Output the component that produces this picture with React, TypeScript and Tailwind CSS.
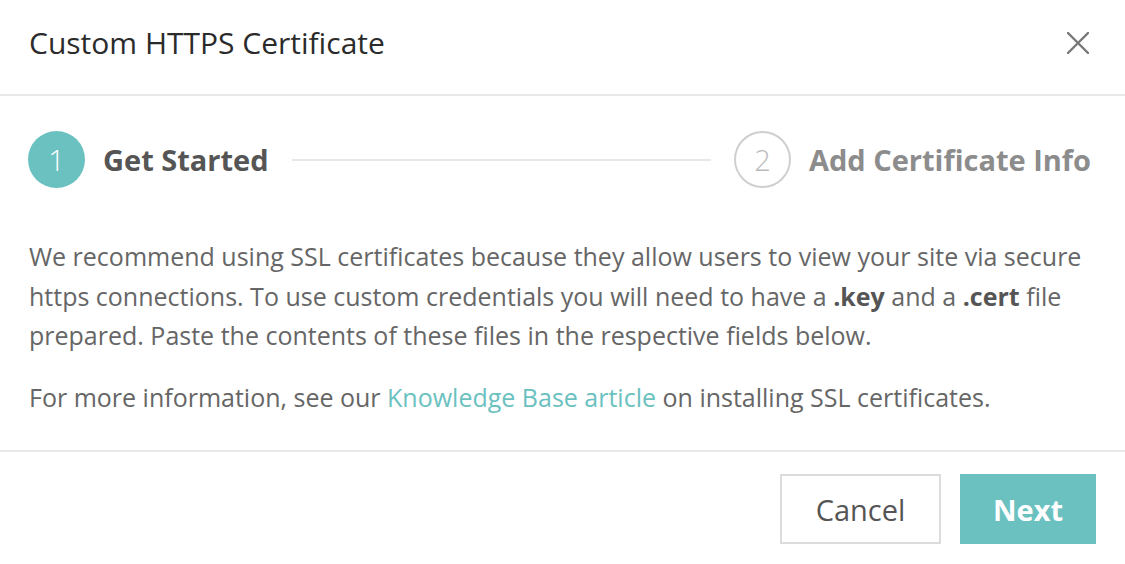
const font = { fontFamily: '"Open Sans", "Noto Sans", sans-serif' };

export default function App() {
  return (
    <div className="w-[1125px] h-[564px] bg-white overflow-hidden" style={font}>
      {/* Header */}
      <div className="h-[96px] flex items-center justify-between pl-[29px] pr-[36px] border-b-2 border-[#e8e8e8]">
        <h1 className="text-[30px] text-[#2b2b2b] leading-none -mt-[8px]">Custom HTTPS Certificate</h1>
        <svg width="22" height="22" viewBox="0 0 22 22" className="-mt-[8px]">
          <path d="M1 1L21 21M21 1L1 21" stroke="#777" strokeWidth="2.4" strokeLinecap="round" />
        </svg>
      </div>

      {/* Stepper */}
      <div className="flex items-center pl-[28px] pr-[34px] pt-[35px]">
        <div className="w-[57px] h-[57px] rounded-full bg-[#6ac1c0] flex items-center justify-center text-white text-[29px] font-light">
          1
        </div>
        <span className="ml-[18px] text-[29px] font-bold text-[#555]">Get Started</span>
        <div className="flex-1 mx-[23px] h-[2px] bg-[#e8e8e8]" />
        <div className="w-[57px] h-[57px] rounded-full border-2 border-[#cfcfcf] flex items-center justify-center text-[#bbb] text-[29px] font-light">
          2
        </div>
        <span className="ml-[18px] text-[29px] font-bold text-[#8c8c8c]">Add Certificate Info</span>
      </div>

      {/* Body */}
      <div className="px-[29px] pt-[49px] pb-[33px] border-b-2 border-[#e8e8e8] text-[25px] leading-[39.6px] text-[#666] whitespace-nowrap">
        <p>
          We recommend using SSL certificates because they allow users to view your site via secure
          <br />
          https connections. To use custom credentials you will need to have a <b className="text-[#555]">.key</b> and a{" "}
          <b className="text-[#555]">.cert</b> file
          <br />
          prepared. Paste the contents of these files in the respective fields below.
        </p>
        <p className="mt-[22px]">
          For more information, see our <a className="text-[#6ac1c0]">Knowledge Base article</a> on installing SSL
          certificates.
        </p>
      </div>

      {/* Footer */}
      <div className="flex justify-end gap-[19px] pt-[22px] pr-[29px]">
        <button className="w-[161px] h-[70px] border-2 border-[#dcdcdc] text-[29px] text-[#555]">Cancel</button>
        <button className="w-[136px] h-[70px] bg-[#6ac1c0] text-[29px] font-bold text-white">Next</button>
      </div>
    </div>
  );
}
